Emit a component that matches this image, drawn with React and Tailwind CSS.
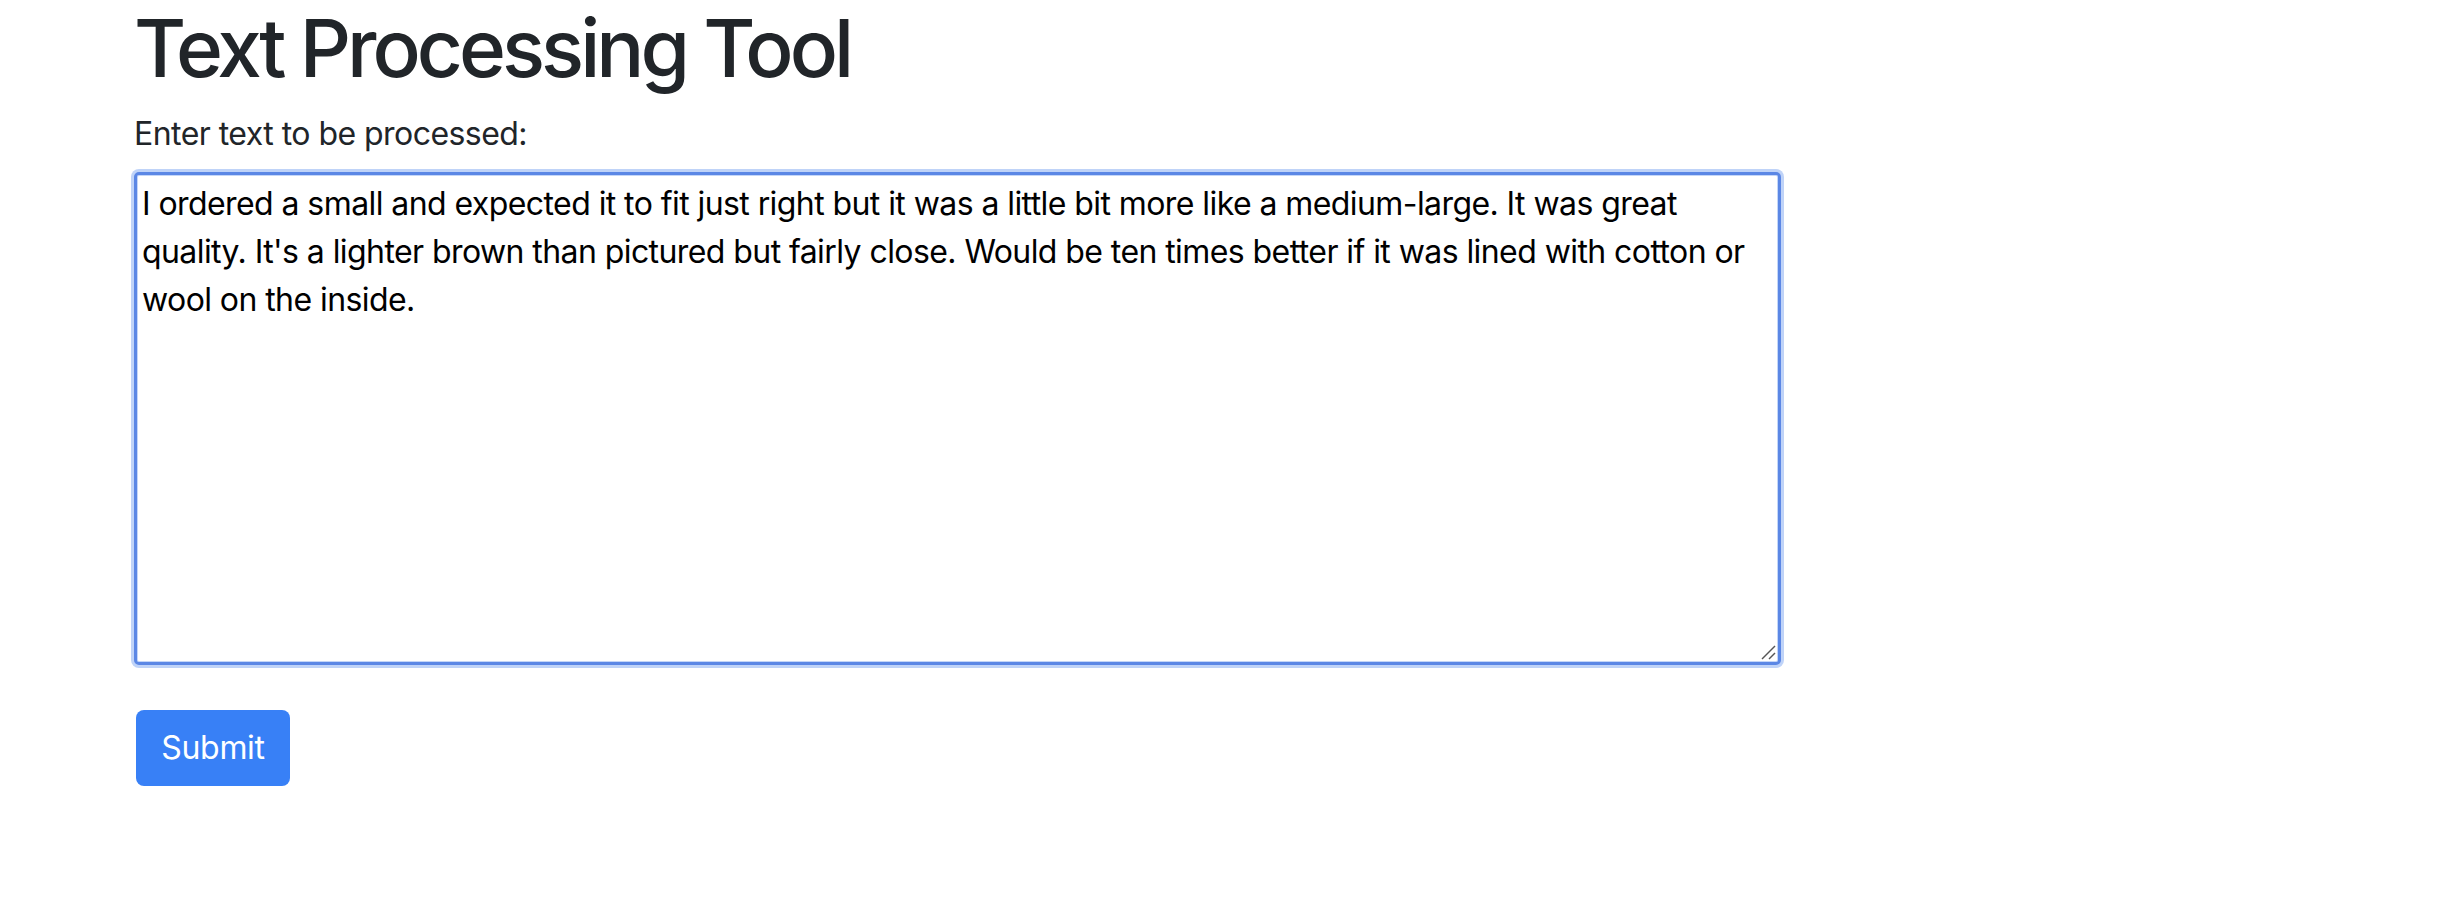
import React from "react";

const text =
  "I ordered a small and expected it to fit just right but it was a little bit more like a medium-large. It was great quality. It's a lighter brown than pictured but fairly close. Would be ten times better if it was lined with cotton or wool on the inside.";

export default function App() {
  return (
    <div className="w-[2452px] h-[910px] bg-white pl-[134px]" style={{ fontFamily: "Inter, 'Noto Sans', sans-serif" }}>
      <h1 className="m-0 text-[80px] leading-[96px] font-medium tracking-[-0.05em] text-[#212529] mb-[14px]">Text Processing Tool</h1>
      <label className="block text-[32px] leading-[48px] tracking-[-0.017em] text-[#212529] mb-[14px]">Enter text to be processed:</label>
      <div className="relative w-[1647px] h-[493px]">
        <textarea
          defaultValue={text}
          className="block w-full h-full resize-none outline-none rounded-[5px] border-[3px] border-[#5b87e5] shadow-[0_0_0_3px_#bfd3f8,inset_0_0_0_1px_#c4d6f8] pl-[5px] pr-[4px] pt-[5px] text-[32px] leading-[48px] tracking-[-0.018em] text-black bg-white"
          style={{ fontFamily: "Inter, 'Noto Sans', sans-serif" }}
        />
        <svg className="absolute right-[5px] bottom-[5px]" width="16" height="16" viewBox="0 0 16 16">
          <line x1="2" y1="15" x2="15" y2="2" stroke="#555" strokeWidth="1.5" />
          <line x1="9" y1="15" x2="15" y2="9" stroke="#555" strokeWidth="1.5" />
        </svg>
      </div>
      <button className="mt-[45px] ml-[2px] w-[154px] h-[76px] rounded-[8px] bg-[#3880f6] text-white text-[32px] leading-[48px] tracking-[-0.01em]">
        Submit
      </button>
    </div>
  );
}
